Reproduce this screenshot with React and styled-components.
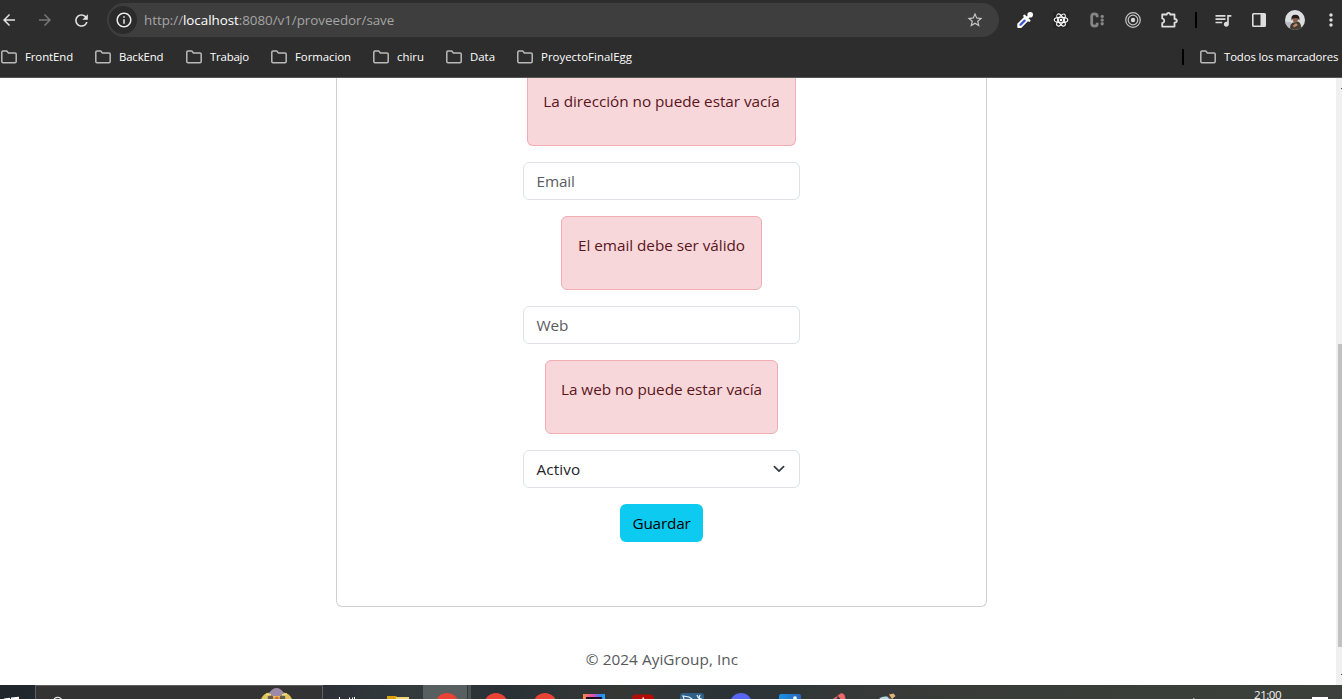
import React from 'react';
import styled, { createGlobalStyle } from 'styled-components';
import { MdArrowBack, MdArrowForward, MdRefresh, MdInfoOutline, MdStarBorder, MdQueueMusic, MdMoreVert } from 'react-icons/md';

const GlobalStyle = createGlobalStyle`
  *, *::before, *::after { box-sizing: border-box; }
  body {
    margin: 0;
    overflow: hidden;
    background: #fff;
    font-family: "Open Sans", "Noto Sans", sans-serif;
  }
  svg { display: block; flex: none; }
`;

const Screen = styled.div`
  display: flex;
  flex-direction: column;
  width: 1342px;
  height: 699px;
  overflow: hidden;
`;

/* Browser chrome */
const Toolbar = styled.header`
  display: flex;
  align-items: center;
  height: 40px;
  flex: none;
  background: #2d2d2d;
`;

const NavButtons = styled.nav`
  display: flex;
  width: 107px;
  flex: none;
  margin-left: -9px;
  margin-right: 9px;
`;

const NavButton = styled.span`
  display: flex;
  justify-content: center;
  width: 36px;
  flex: none;
  color: ${(p) => (p.$disabled ? '#777' : '#e3e3e3')};
`;

const AddressBar = styled.div`
  display: flex;
  align-items: center;
  width: 892px;
  height: 34px;
  flex: none;
  padding: 0 15px 0 1px;
  border-radius: 17px;
  background: #3e3e3e;
`;

const SiteInfo = styled.span`
  display: flex;
  align-items: center;
  justify-content: center;
  width: 28px;
  height: 28px;
  flex: none;
  margin: 0 7px 0 1px;
  padding-left: 2px;
  border-radius: 50%;
  background: #2b2b2b;
  color: #ececec;
`;

const Address = styled.span`
  flex: 1;
  color: #a5a5a5;
  font-size: 13.4px;
  line-height: 18px;
  letter-spacing: -0.04px;
  white-space: nowrap;
`;

const Host = styled.span`
  color: #fff;
`;

const Extensions = styled.div`
  display: flex;
  align-items: center;
  flex: none;
  margin-left: 8px;
`;

const Slot = styled.span`
  display: flex;
  justify-content: center;
  align-items: center;
  width: 36px;
  height: 24px;
  flex: none;
  color: #dcdcdc;
`;

const Separator = styled.i`
  width: 2px;
  height: 16px;
  flex: none;
  margin: ${(p) => p.$margin};
  background: #000;
`;

const BookmarkBar = styled.div`
  display: flex;
  align-items: center;
  height: 38px;
  flex: none;
  padding: 0 0 3px 1px;
  border-bottom: 1px solid #555;
  background: #2d2d2d;
`;

const Bookmark = styled.span`
  display: flex;
  align-items: center;
  gap: 8px;
  width: ${(p) => p.$width}px;
  flex: none;
  color: #fff;
  font-size: 11.4px;
  line-height: 16px;
  letter-spacing: ${(p) => p.$spacing || 0}px;
  white-space: nowrap;
`;

const Spacer = styled.span`
  flex: 1;
`;

/* Web page */
const Viewport = styled.div`
  display: flex;
  height: 607px;
  flex: none;
  overflow: hidden;
`;

const Page = styled.main`
  display: flex;
  flex-direction: column;
  align-items: center;
  width: 1336px;
  padding-right: 13px;
  font-weight: 365;
`;

const Card = styled.section`
  display: flex;
  flex-direction: column;
  align-items: center;
  gap: 16px;
  width: 651px;
  height: 529px;
  flex: none;
  border: 1px solid #d0d1d2;
  border-top: 0;
  border-radius: 0 0 6px 6px;
`;

const Alert = styled.div`
  width: ${(p) => p.$width}px;
  height: 74px;
  flex: none;
  padding: 16px 0;
  border: 1px solid #f1aeb5;
  border-radius: 6px;
  background: #f8d7da;
  color: #58151c;
  font-size: 15.3px;
  line-height: 24px;
  letter-spacing: -0.03px;
  text-align: center;
  white-space: nowrap;
`;

const ClippedAlert = styled(Alert)`
  height: 68px;
  padding-top: 11px;
  border-top: 0;
  border-radius: 0 0 6px 6px;
`;

const Field = styled.div`
  display: flex;
  align-items: center;
  justify-content: space-between;
  width: 277px;
  height: 38px;
  flex: none;
  padding: 0 12.5px;
  border: 1px solid #dee2e6;
  border-radius: 6px;
  color: ${(p) => (p.$filled ? '#212529' : '#595c5f')};
  font-size: 15.3px;
  line-height: 24px;
  letter-spacing: ${(p) => (p.$filled ? 0.12 : -0.1)}px;
`;

const SubmitButton = styled.button`
  width: 83px;
  height: 38px;
  flex: none;
  padding: 0;
  border: 0;
  border-radius: 6px;
  background: #0dcaf0;
  color: #000;
  font: inherit;
  font-size: 15.3px;
  line-height: 24px;
  letter-spacing: -0.2px;
`;

const Copyright = styled.footer`
  margin-top: 40px;
  padding-left: 1px;
  color: #55595c;
  font-size: 15.3px;
  line-height: 24px;
  letter-spacing: 0.06px;
`;

const ScrollTrack = styled.div`
  display: flex;
  flex-direction: column;
  align-items: flex-end;
  width: 6px;
  flex: none;
  background: #f0f0f0;
`;

const ScrollTick = styled.i`
  width: 1px;
  height: 1px;
  flex: none;
  margin: ${(p) => p.$margin};
  background: #505050;
`;

const ScrollThumb = styled.i`
  width: 4px;
  height: 303px;
  flex: none;
  background: #c1c1c1;
`;

/* Desktop taskbar */
const Taskbar = styled.div`
  display: flex;
  height: 14px;
  flex: none;
  overflow: hidden;
  background: linear-gradient(90deg, #20272c 0, #2b3137 330px, #343b3d 410px, #293136 500px, #353735 620px, #2b3337 730px, #373a38 880px, #3a3e39 1100px, #3d413b 1342px);
`;

const StartButton = styled.span`
  width: 35px;
  flex: none;
`;

const SearchBox = styled.span`
  display: flex;
  justify-content: space-between;
  width: 288px;
  flex: none;
  padding: 0 30px 0 16px;
  border: 1px solid #5c6062;
  border-bottom: 0;
  background: #333;
`;

const TaskLabel = styled.span`
  width: 50px;
  flex: none;
`;

const TaskSlot = styled.span`
  display: flex;
  justify-content: center;
  width: 49px;
  flex: none;
`;

const ActiveTask = styled(TaskSlot)`
  background: linear-gradient(90deg, transparent 0 1px, #585f60 1px 45px, #303739 45px 46px, #4c5355 46px 49px);
`;

const Clock = styled.span`
  width: 30px;
  flex: none;
  padding-top: 2px;
  color: #f2f2f2;
  font-size: 11.6px;
  line-height: 16px;
  letter-spacing: -0.5px;
`;

const NotificationSlot = styled.span`
  width: 30px;
  flex: none;
  margin-left: 28px;
`;

const Folder = () => (
  <svg width="16" height="14" viewBox="0 0 16 14" fill="none" stroke="#bababa" strokeWidth="1.5" strokeLinejoin="round">
    <path d="M.8 11.6V2.2Q.8 1 2 1H5.8L7.4 2.9H14Q15.2 2.9 15.2 4.1V11.6Q15.2 12.8 14 12.8H2Q.8 12.8.8 11.6Z" />
  </svg>
);

const Eyedropper = () => (
  <svg width="18" height="18" viewBox="0 0 18 18">
    <path d="M2 16.2V13L9.3 5.7 12.4 8.8 5 16.2Z" fill="#fff" stroke="#fff" strokeWidth="1.4" strokeLinejoin="round" />
    <path d="M4.5 13.7 8.6 9.6" stroke="#3557d6" strokeWidth="2.3" strokeLinecap="round" />
    <path d="M8.4 4.8 13.3 9.7M11 7 14.5 3.7" stroke="#fff" strokeWidth="2.4" strokeLinecap="round" />
    <circle cx="14.2" cy="3.8" r="2.8" fill="#fff" />
  </svg>
);

const Atom = () => (
  <svg width="16" height="16" viewBox="0 0 16 16" fill="none" stroke="#fff" strokeWidth="1.1">
    <path d="M0 0H16V16H0Z" fill="#252525" stroke="none" />
    <ellipse cx="8" cy="8" rx="6.8" ry="2.7" />
    <ellipse cx="8" cy="8" rx="6.8" ry="2.7" transform="rotate(60 8 8)" />
    <ellipse cx="8" cy="8" rx="6.8" ry="2.7" transform="rotate(120 8 8)" />
    <circle cx="8" cy="8" r="1.3" fill="#fff" stroke="none" />
  </svg>
);

const DottedC = () => (
  <svg width="16" height="16" viewBox="0 0 16 16">
    <path d="M8.2 5.2V4Q8.2 1.9 5.5 1.9 2.7 1.9 2.7 4.4V11.6Q2.7 14.1 5.5 14.1 8.2 14.1 8.2 12V10.8" fill="none" stroke="#858585" strokeWidth="2.8" />
    <g fill="#858585">
      <circle cx="13.2" cy="4.5" r="1.7" />
      <circle cx="13.2" cy="8.1" r="1.7" />
      <circle cx="13.2" cy="11.7" r="1.7" />
    </g>
  </svg>
);

const Target = () => (
  <svg width="16" height="16" viewBox="0 0 16 16" fill="none" stroke="#c4c4c4" strokeWidth="1.2">
    <circle cx="8" cy="8" r="7.3" />
    <circle cx="8" cy="8" r="4.8" />
    <circle cx="8" cy="8" r="2.2" fill="#d6d6d6" stroke="none" />
  </svg>
);

const Puzzle = () => (
  <svg width="18" height="18" viewBox="0 0 18 18" fill="none" stroke="#dedede" strokeWidth="1.8" strokeLinejoin="round">
    <path d="M2.2 3.5H6.8Q6.8 1.9 8.5 1.9T10.2 3.5H14.5V8Q16.8 8 16.8 9.8T14.5 11.6V15.6H2.2V12.1Q4.3 11.6 4.3 9.8T2.2 7.4Z" />
  </svg>
);

const SidePanel = () => (
  <svg width="14" height="14" viewBox="0 0 14 14">
    <rect x=".8" y=".8" width="12.4" height="12.4" rx=".8" fill="none" stroke="#dedede" strokeWidth="1.6" />
    <path d="M8.5 1H13V13H8.5Z" fill="#dedede" />
  </svg>
);

const Avatar = () => (
  <svg width="20" height="20" viewBox="0 0 20 20">
    <defs><clipPath id="face"><circle cx="10" cy="10" r="10" /></clipPath></defs>
    <g clipPath="url(#face)">
      <path d="M0 0H20V20H0Z" fill="#dcdddf" />
      <path d="M0 12H6V20H0Z" fill="#b9bcc0" />
      <path d="M5 20Q4.5 14 8 12.5L13 11.5Q16.5 13 16.5 20Z" fill="#453d31" />
      <ellipse cx="10.3" cy="9.3" rx="2.6" ry="3.2" fill="#8e5f4e" />
      <path d="M6.6 10.5Q5.4 4.8 10.3 4.8T14.4 10.5L12.8 8.4Q10.3 7.6 7.8 8.6Z" fill="#241a1a" />
      <path d="M8 15.5 11 13.3 13 15 9 17.5Z" fill="#bd8b72" />
    </g>
  </svg>
);

const Chevron = () => (
  <svg width="16" height="12" viewBox="0 0 16 12" fill="none" stroke="#343a40" strokeWidth="1.7" strokeLinecap="round" strokeLinejoin="round">
    <path d="M3.4 3.6 8 8.2 12.6 3.6" />
  </svg>
);

const WindowsLogo = () => (
  <svg width="35" height="14" viewBox="0 0 35 14">
    <path d="M4 14V13.4L10 12.7V14ZM11 14V12.6L19 11.7V14Z" fill="#fff" />
  </svg>
);

const Magnifier = () => (
  <svg width="12" height="13" viewBox="0 0 12 13">
    <circle cx="5.7" cy="15.5" r="4.2" fill="none" stroke="#e6e6e6" strokeWidth="1.3" />
  </svg>
);

const SearchArt = () => (
  <svg width="31" height="13" viewBox="0 0 31 13">
    <path d="M0 13Q3 6 10 6.5H21Q28 6 31 13Z" fill="#dfc45c" />
    <path d="M8 7.5Q11 2 15.5 2T23 7.5L19 10H12Z" fill="#9d8aa8" />
    <circle cx="9.5" cy="12" r="2.8" fill="#65594b" />
    <circle cx="21.5" cy="12" r="2.8" fill="#65594b" />
    <path d="M5 8 10 9M26 8 21 9" stroke="#f0dc83" strokeWidth="1.5" />
    <circle cx="15.8" cy="12.6" r="2" fill="#e75f30" />
  </svg>
);

const LabelTops = () => (
  <svg width="50" height="14" viewBox="0 0 50 14">
    <path d="M16.5 12V14M26.5 12.5V14M29.5 12.5V14M31.5 12V14" stroke="#fff" />
  </svg>
);

const Explorer = () => (
  <svg width="22" height="14" viewBox="0 0 22 14">
    <path d="M0 11H9L11 13V14H0Z" fill="#dda20b" />
    <path d="M9 12H22V14H9Z" fill="#f2d675" />
  </svg>
);

const RedDisc = () => (
  <svg width="24" height="14" viewBox="0 0 24 14">
    <circle cx="12" cy="20" r="12" fill="#e94335" />
  </svg>
);

const Ide = () => (
  <svg width="22" height="14" viewBox="0 0 22 14">
    <defs>
      <linearGradient id="ide"><stop stopColor="#f78a3e" /><stop offset=".45" stopColor="#e64cb0" /><stop offset=".8" stopColor="#2a86f2" /><stop offset="1" stopColor="#1ba7f5" /></linearGradient>
    </defs>
    <path d="M0 9H22V14H0Z" fill="url(#ide)" />
    <path d="M3 12H19V14H3Z" fill="#160b25" />
  </svg>
);

const RedApp = () => (
  <svg width="22" height="14" viewBox="0 0 22 14">
    <path d="M0 14Q0 9.5 4 9.5H18Q22 9.5 22 14Z" fill="#b50c06" />
    <path d="M11.2 12.5V14" stroke="#fff" strokeWidth="1.5" />
  </svg>
);

const Database = () => (
  <svg width="24" height="14" viewBox="0 0 24 14">
    <path d="M0 14V11Q0 8 3 8H21Q24 8 24 11V14Z" fill="#2d6189" />
    <path d="M4 14 3 11 9 12 12 14M17 10 18.5 13 22 14M20 10 19 13" stroke="#e7eef4" strokeWidth="1.2" fill="none" />
  </svg>
);

const PurpleDisc = () => (
  <svg width="22" height="14" viewBox="0 0 22 14">
    <circle cx="11" cy="19" r="11" fill="#5865f2" />
  </svg>
);

const BlueTile = () => (
  <svg width="22" height="14" viewBox="0 0 22 14">
    <defs><linearGradient id="tile"><stop stopColor="#1692e6" /><stop offset="1" stopColor="#2b64bd" /></linearGradient></defs>
    <path d="M0 14V11Q0 9 2 9H20Q22 9 22 11V14Z" fill="url(#tile)" />
    <circle cx="16" cy="13" r="1.8" fill="#fff" />
  </svg>
);

const Pencil = () => (
  <svg width="24" height="14" viewBox="0 0 24 14">
    <path d="M6 14 13.5 8.5Q16 7.5 17.5 10L18.5 14H13L11 11.5 9 14Z" fill="#ef666b" />
    <path d="M10 10.5 13 14" stroke="#423c3b" strokeWidth="1" />
  </svg>
);

const Brush = () => (
  <svg width="24" height="14" viewBox="0 0 24 14">
    <path d="M3 14Q5 11 11 11.5L16 14Z" fill="#b7d7e4" />
    <path d="M13 9.5 17.5 8.5 19.5 11 16 14" fill="#e2b478" />
    <path d="M12 12 15 14" stroke="#495b64" strokeWidth="1.5" />
  </svg>
);

const Tray = () => (
  <svg width="70" height="14" viewBox="0 0 70 14">
    <path d="M9 14 9.8 13 10.6 14Z" fill="#fff" />
  </svg>
);

const Notification = () => (
  <svg width="16" height="14" viewBox="0 0 16 14">
    <path d="M0 12H16V14H0Z" fill="#fff" />
  </svg>
);

const bookmarks = [
  { label: 'FrontEnd', width: 94, spacing: -0.08 },
  { label: 'BackEnd', width: 91, spacing: -0.16 },
  { label: 'Trabajo', width: 85, spacing: -0.2 },
  { label: 'Formacion', width: 102, spacing: -0.05 },
  { label: 'chiru', width: 73 },
  { label: 'Data', width: 71 },
  { label: 'ProyectoFinalEgg', width: 116, spacing: 0.03 },
];

export default function App() {
  return (
    <Screen>
      <GlobalStyle />
      <Toolbar>
        <NavButtons>
          <NavButton><MdArrowBack size={18} /></NavButton>
          <NavButton $disabled><MdArrowForward size={18} /></NavButton>
          <NavButton><MdRefresh size={19} /></NavButton>
        </NavButtons>
        <AddressBar>
          <SiteInfo><MdInfoOutline size={18} /></SiteInfo>
          <Address>http://<Host>localhost</Host>:8080/v1/proveedor/save</Address>
          <MdStarBorder size={18} color="#c7c7c7" />
        </AddressBar>
        <Extensions>
          <Slot><Eyedropper /></Slot>
          <Slot><Atom /></Slot>
          <Slot><DottedC /></Slot>
          <Slot><Target /></Slot>
          <Slot><Puzzle /></Slot>
          <Separator $margin="0 8px" />
          <Slot><MdQueueMusic size={20} /></Slot>
          <Slot><SidePanel /></Slot>
          <Slot><Avatar /></Slot>
          <Slot><MdMoreVert size={20} /></Slot>
        </Extensions>
      </Toolbar>
      <BookmarkBar>
        {bookmarks.map((b) => (
          <Bookmark key={b.label} $width={b.width} $spacing={b.spacing}><Folder />{b.label}</Bookmark>
        ))}
        <Spacer />
        <Separator $margin="0 16px 0 0" />
        <Bookmark $width={142} $spacing={-0.14}><Folder />Todos los marcadores</Bookmark>
      </BookmarkBar>
      <Viewport>
        <Page>
          <Card>
            <ClippedAlert $width={269}>La dirección no puede estar vacía</ClippedAlert>
            <Field>Email</Field>
            <Alert $width={201}>El email debe ser válido</Alert>
            <Field>Web</Field>
            <Alert $width={233}>La web no puede estar vacía</Alert>
            <Field $filled>Activo<Chevron /></Field>
            <SubmitButton>Guardar</SubmitButton>
          </Card>
          <Copyright>© 2024 AyiGroup, Inc</Copyright>
        </Page>
        <ScrollTrack>
          <ScrollTick $margin="10px 0 255px" />
          <ScrollThumb />
          <ScrollTick $margin="27px 0 0" />
        </ScrollTrack>
      </Viewport>
      <Taskbar>
        <StartButton><WindowsLogo /></StartButton>
        <SearchBox><Magnifier /><SearchArt /></SearchBox>
        <TaskLabel><LabelTops /></TaskLabel>
        <TaskSlot><Explorer /></TaskSlot>
        <ActiveTask><RedDisc /></ActiveTask>
        <TaskSlot><RedDisc /></TaskSlot>
        <TaskSlot><RedDisc /></TaskSlot>
        <TaskSlot><Ide /></TaskSlot>
        <TaskSlot><RedApp /></TaskSlot>
        <TaskSlot><Database /></TaskSlot>
        <TaskSlot><PurpleDisc /></TaskSlot>
        <TaskSlot><BlueTile /></TaskSlot>
        <TaskSlot><Pencil /></TaskSlot>
        <TaskSlot><Brush /></TaskSlot>
        <Spacer />
        <Tray />
        <Clock>21:00</Clock>
        <NotificationSlot><Notification /></NotificationSlot>
      </Taskbar>
    </Screen>
  );
}
